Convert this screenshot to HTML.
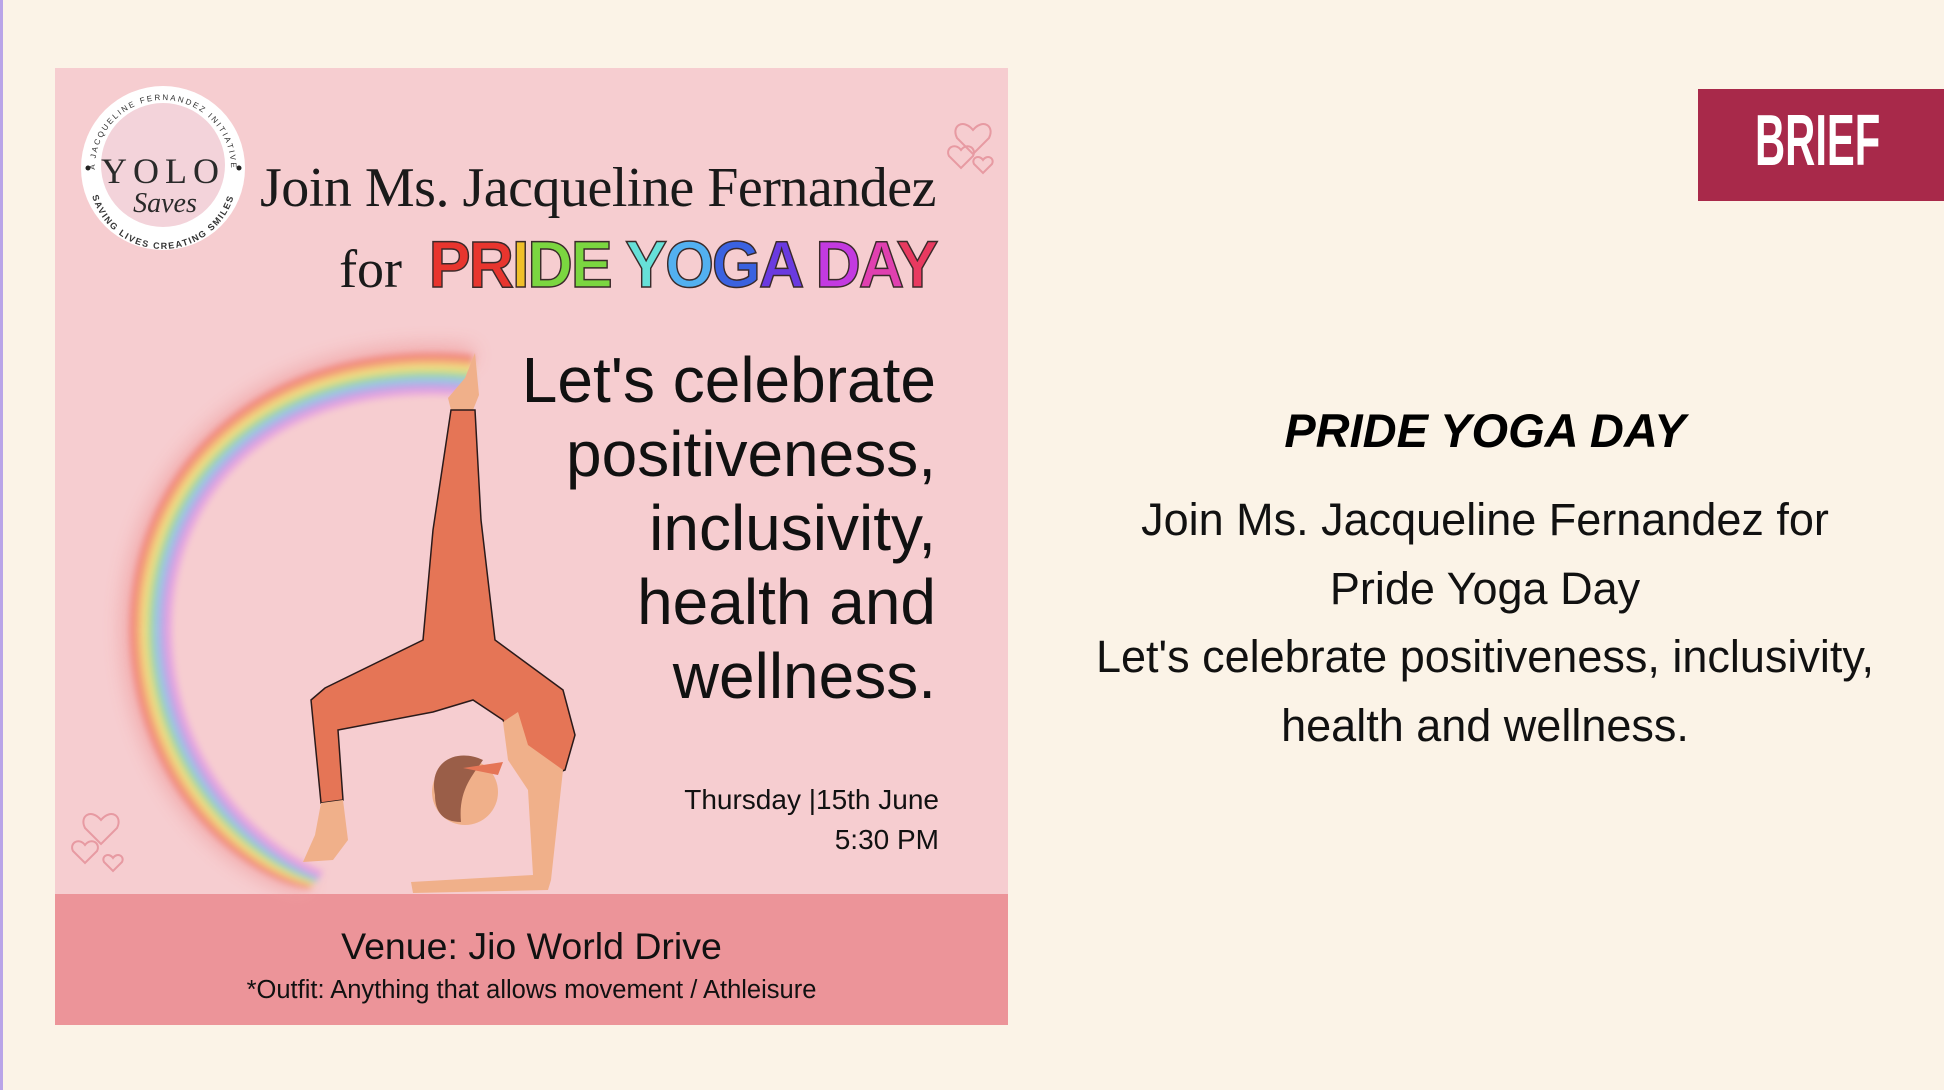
<!DOCTYPE html>
<html><head><meta charset="utf-8"><style>
html,body{margin:0;padding:0}
body{width:1944px;height:1090px;background:#FBF3E7;position:relative;overflow:hidden;font-family:"Liberation Sans",sans-serif;border-left:3px solid #b9a4e8;box-sizing:border-box}
.a{position:absolute;white-space:nowrap}
</style></head><body>
<div class="a" style="left:52px;top:68px;width:953px;height:957px;background:#F6CDD0"></div>
<div class="a" style="left:52px;top:894px;width:953px;height:131px;background:#EC9499"></div>

<svg class="a" style="left:0;top:0" width="1010" height="1030" viewBox="0 0 1010 1030">
<defs><filter id="bl"><feGaussianBlur stdDeviation="3.5"/></filter>
<filter id="bl2"><feGaussianBlur stdDeviation="10"/></filter></defs>
<g fill="none" opacity="0.9">
<path d="M470 356 C 250 336, 122 480, 128 640 C 134 780, 230 872, 305 886" stroke="#f0a0a0" stroke-width="16" filter="url(#bl2)"/>
<g filter="url(#bl)">
<path d="M470 358 C 250 338, 124 480, 130 640 C 136 780, 232 872, 307 886" stroke="#f07a70" stroke-width="6"/>
<path d="M470 364 C 254 344, 130 482, 136 640 C 142 778, 236 868, 309 884" stroke="#f4b070" stroke-width="6"/>
<path d="M470 370 C 258 350, 136 484, 142 640 C 148 776, 240 864, 311 882" stroke="#eee27a" stroke-width="6"/>
<path d="M470 376 C 262 356, 142 486, 148 640 C 154 774, 244 860, 313 880" stroke="#9fd890" stroke-width="6"/>
<path d="M470 382 C 266 362, 148 488, 154 640 C 160 772, 248 856, 315 878" stroke="#8cc6e8" stroke-width="6"/>
<path d="M470 388 C 270 368, 154 490, 160 640 C 166 770, 252 852, 317 876" stroke="#b9a0e8" stroke-width="6"/>
<path d="M470 394 C 274 374, 160 492, 166 640 C 172 768, 256 848, 319 874" stroke="#e6a0e0" stroke-width="6"/>
</g></g>
<!-- logo -->
<circle cx="160" cy="168" r="82" fill="#fff"/>
<circle cx="160" cy="165" r="62" fill="#f3d3da"/>
<text x="160" y="183" text-anchor="middle" font-family="Liberation Serif" font-size="36" letter-spacing="6" fill="#2a2a2a">YOLO</text>
<text x="162" y="212" text-anchor="middle" font-family="Liberation Serif" font-style="italic" font-size="28" fill="#2a2a2a">Saves</text>
<circle cx="85" cy="168" r="2.5" fill="#222"/><circle cx="236" cy="168" r="2.5" fill="#222"/>
<path id="ta" d="M92 168 A68 68 0 0 1 228 168" fill="none"/>
<text font-size="8" letter-spacing="2" fill="#333"><textPath href="#ta" startOffset="50%" text-anchor="middle">A JACQUELINE FERNANDEZ INITIATIVE</textPath></text>
<path id="tb" d="M86 175 A74 74 0 0 0 234 175" fill="none"/>
<text font-size="9" font-weight="bold" letter-spacing="1.5" fill="#333"><textPath href="#tb" startOffset="50%" text-anchor="middle">SAVING LIVES CREATING SMILES</textPath></text>
<!-- hearts -->
<g fill="none" stroke="#e79aa2" stroke-width="2">
<path d="M970 130 c-10 -12 -22 -4 -16 8 l16 16 l16 -16 c6 -12 -6 -20 -16 -8z"/>
<path d="M958 150 c-6 -8 -16 -2 -12 6 l12 12 l12 -12 c4 -8 -6 -14 -12 -6z"/>
<path d="M980 160 c-4 -6 -12 -2 -9 4 l9 9 l9 -9 c3 -6 -5 -10 -9 -4z"/>
<path d="M98 820 c-10 -12 -22 -4 -16 8 l16 16 l16 -16 c6 -12 -6 -20 -16 -8z"/>
<path d="M82 845 c-6 -8 -16 -2 -12 6 l12 12 l12 -12 c4 -8 -6 -14 -12 -6z"/>
<path d="M110 858 c-4 -6 -12 -2 -9 4 l9 9 l9 -9 c3 -6 -5 -10 -9 -4z"/>
</g>
<!-- figure -->
<g stroke="#2a1a1a" stroke-width="1.5">
<path d="M472 353 L476 395 L470 410 L448 410 L445 398 L462 378z" fill="#F0B08A" stroke="none"/>
<path d="M448 410 L472 410 L478 520 L492 640 L560 690 L572 735 L562 770 L548 775 L510 745 L500 720 L470 700 L430 712 L335 730 L340 800 L318 803 L308 700 L322 688 L420 640 L430 530z" fill="#E57556"/>
<path d="M318 803 L340 800 L345 840 L330 860 L300 862 L312 835z" fill="#F0B08A" stroke="none"/>
<path d="M500 722 L515 712 L525 745 L560 770 L548 880 L545 890 L410 893 L408 882 L530 875 L525 790 L505 760z" fill="#F0B08A" stroke="none"/>
<circle cx="462" cy="792" r="33" fill="#F0B08A" stroke="none"/>
<path d="M432 795 C425 760 455 748 480 760 C470 775 455 790 458 822 C440 822 432 812 432 795z" fill="#9A5E48" stroke="none"/>
<path d="M460 768 L500 762 L495 775z" fill="#E57556" stroke="none"/>
</g>
</svg>

<div class="a" style="right:calc(1944px - 936px);top:156px;font-family:'Liberation Serif',serif;font-size:56px;letter-spacing:-0.5px;color:#1a1a1a">Join Ms. Jacqueline Fernandez</div>
<div class="a" style="right:calc(1944px - 936px);top:226px;font-family:'Liberation Serif',serif;font-size:54px;color:#1a1a1a">for <span style="display:inline-block;font-family:'Liberation Sans',sans-serif;font-weight:bold;font-size:66px;letter-spacing:-2px;transform:scaleX(0.95);transform-origin:right;margin-left:-14px;-webkit-text-stroke:1.5px #3a2a2a"><span style="color:#e8352e">PR</span><span style="color:#f0c02a">I</span><span style="color:#7bd640">DE</span> <span style="color:#66e0d8">Y</span><span style="color:#52b0f0">O</span><span style="color:#3a62e0">G</span><span style="color:#6a3ae0">A</span> <span style="color:#c33ae0">D</span><span style="color:#e040b0">A</span><span style="color:#e83a60">Y</span></span></div>

<div class="a" style="right:calc(1944px - 936px);top:343px;font-size:64px;line-height:74px;text-align:right;color:#111">Let's celebrate<br>positiveness,<br>inclusivity,<br>health and<br>wellness.</div>

<div class="a" style="right:calc(1944px - 939px);top:780px;font-size:28px;line-height:40px;text-align:right;color:#111">Thursday |15th June<br>5:30 PM</div>

<div class="a" style="left:52px;width:953px;top:925px;text-align:center;font-size:37.5px;color:#111">Venue: Jio World Drive</div>
<div class="a" style="left:52px;width:953px;top:976px;text-align:center;font-size:25.5px;color:#111">*Outfit: Anything that allows movement / Athleisure</div>

<div class="a" style="left:1695px;top:89px;width:249px;height:112px;background:#A8294A"></div>
<div class="a" style="left:1752px;top:100px;font-size:72px;font-weight:bold;color:#fff;transform:scaleX(0.58);transform-origin:left">BRIEF</div>

<div class="a" style="left:1040px;width:884px;top:403px;text-align:center;font-size:47px;font-weight:bold;font-style:italic;color:#000">PRIDE YOGA DAY</div>
<div class="a" style="left:1040px;width:884px;top:486px;text-align:center;font-size:45px;line-height:68.5px;color:#111">Join Ms. Jacqueline Fernandez for<br>Pride Yoga Day<br>Let's celebrate positiveness, inclusivity,<br>health and wellness.</div>
</body></html>
